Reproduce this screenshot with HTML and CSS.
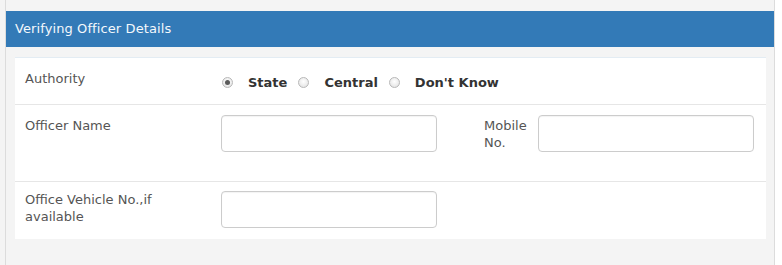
FILE: index.html
```html
<!DOCTYPE html>
<html>
<head>
<meta charset="utf-8">
<link rel="stylesheet" href="styles.css">
</head>
<body>
<div class="page">
  <div class="gutter"></div>
  <div class="panel">
    <div class="panel-heading">Verifying Officer Details</div>
    <div class="panel-body">
      <div class="row row-auth">
        <div class="label">Authority</div>
        <div class="radios">
          <label class="radio"><input type="radio" name="auth" checked><span>State</span></label>
          <label class="radio"><input type="radio" name="auth"><span>Central</span></label>
          <label class="radio"><input type="radio" name="auth"><span>Don't Know</span></label>
        </div>
      </div>
      <div class="row row-officer">
        <div class="label">Officer Name</div>
        <div><input class="field" type="text"></div>
        <div class="label label-mobile">Mobile<br>No.</div>
        <div><input class="field" type="text"></div>
      </div>
      <div class="row row-vehicle">
        <div class="label label-tight">Office Vehicle No.,if<br>available</div>
        <div><input class="field" type="text"></div>
      </div>
    </div>
  </div>
</div>
</body>
</html>
```

FILE: styles.css
```css
* { box-sizing: border-box; }
html, body {
  margin: 0;
  padding: 0;
  background: #ffffff;
  font-family: "DejaVu Sans", Verdana, sans-serif;
}
.page {
  display: flex;
  height: 265px;
  overflow: hidden;
}
.gutter {
  width: 5px;
  background: #f4f4f4;
}
.panel {
  width: 770px;
  border-left: 1px solid #dcdcdc;
  border-right: 1px solid #dcdcdc;
  background: #f4f4f4;
  padding-top: 11px;
}
.panel-heading {
  height: 36px;
  background: #337ab7;
  color: #f4f8fc;
  font-size: 13px;
  line-height: 36px;
  padding-left: 9px;
  letter-spacing: 0.1px;
}
.panel-body {
  margin: 10px 8px 0 9px;
  background: #ffffff;
  border-top: 1px solid #e3ecf3;
}
.row {
  display: grid;
  grid-template-columns: 196px 216px 101px 216px;
  padding: 11px 11px 10px 10px;
  border-bottom: 1px solid #e6e6e6;
}
.row:last-child { border-bottom: none; }
.row-auth { height: 47px; padding-top: 10px; }
.row-officer { height: 77px; padding-top: 10px; }
.row-vehicle { height: 57px; padding-top: 9px; }
.label {
  font-size: 13px;
  line-height: 17px;
  color: #555555;
  padding-top: 2px;
}
.label-tight { padding-top: 0; }
.label-mobile { padding-left: 47px; }
.radios {
  grid-column: 2 / span 3;
  display: flex;
  align-items: center;
  padding-top: 5px;
  height: 24px;
}
.radio {
  display: flex;
  align-items: center;
  margin-right: 10px;
  font-size: 13px;
  font-weight: bold;
  color: #333333;
}
.radio input {
  appearance: none;
  -webkit-appearance: none;
  width: 11px;
  height: 11px;
  margin: 0 15px 0 1px;
  border: 1px solid #b8b8b8;
  border-radius: 50%;
  background: radial-gradient(circle at 50% 40%, #ffffff 0%, #e8e8e8 70%, #d8d8d8 100%);
  position: relative;
}
.radio input:checked::after {
  content: "";
  position: absolute;
  left: 2px;
  top: 2px;
  width: 5px;
  height: 5px;
  border-radius: 50%;
  background: #5a5a5a;
}
.field {
  display: block;
  width: 216px;
  height: 37px;
  border: 1px solid #cccccc;
  border-radius: 4px;
  background: #ffffff;
  box-shadow: inset 0 1px 1px rgba(0,0,0,0.05);
  margin: 0;
  padding: 0;
}
```
